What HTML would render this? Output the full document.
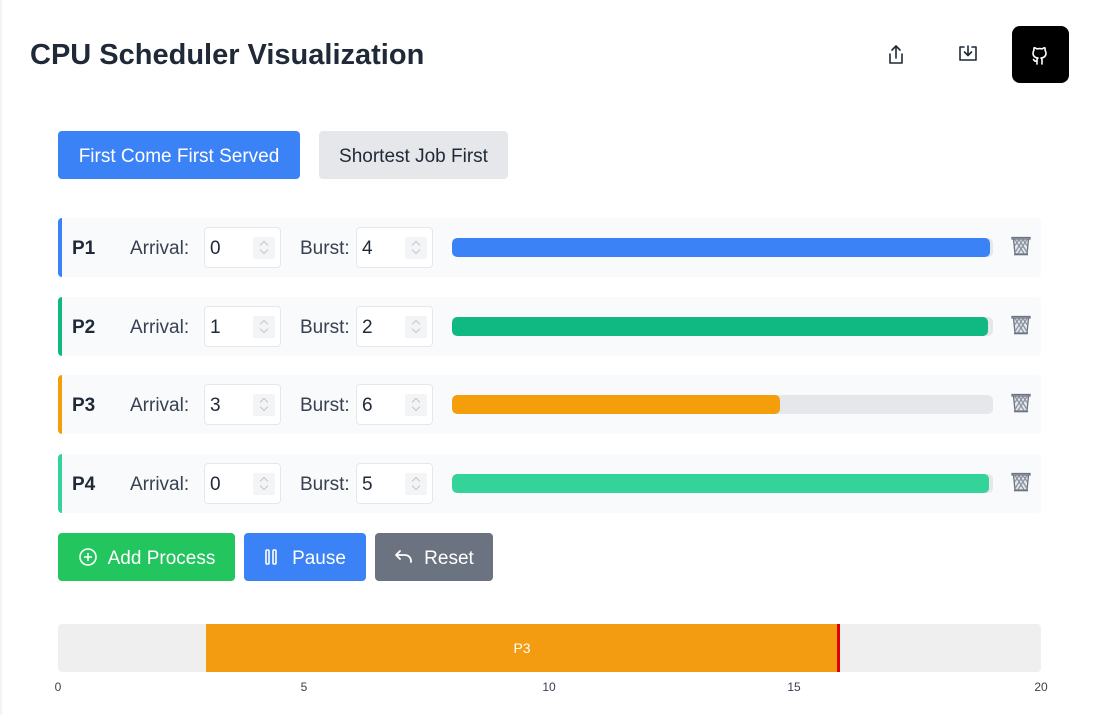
<!DOCTYPE html>
<html><head><meta charset="utf-8"><style>
*{box-sizing:border-box;margin:0;padding:0}
body{width:1098px;height:715px;background:#fff;font-family:"Liberation Sans",sans-serif;color:#1f2937;position:relative;overflow:hidden}
.abs{position:absolute}
h1{position:absolute;left:30px;top:39px;font-size:29px;font-weight:bold;color:#1f2937}
.btn{position:absolute;border-radius:4px;font-size:19px;display:flex;align-items:center;justify-content:center;color:#fff;padding-top:3px}
.row{position:absolute;left:58px;width:983px;height:59px;background:#f9fafb;border-radius:4px;border-left:4px solid}
.row .p{position:absolute;left:10px;top:20px;font-size:19px;font-weight:bold}
.row .l{position:absolute;top:20px;font-size:19px;color:#374151}
.inp{position:absolute;top:9px;width:77px;height:41px;border:1px solid #e5e7eb;border-radius:4px;background:#fff}
.inp span{position:absolute;left:5px;top:10px;font-size:19px}
.inp i{position:absolute;right:5px;top:9px;width:22px;height:22px;background:#f3f4f6;border-radius:2px}
.inp i:before,.inp i:after{content:"";position:absolute;left:8px;width:5px;height:5px;border:solid #c4c7cc;border-width:1.3px 0 0 1.3px}
.inp i:before{top:5px;transform:rotate(45deg)}
.inp i:after{top:10px;transform:rotate(225deg)}
.track{position:absolute;left:390px;top:20px;width:541px;height:19px;background:#e5e7eb;border-radius:5px;overflow:hidden}
.track b{display:block;height:100%;border-radius:5px}
.trash{position:absolute;left:949px;top:18px}
.ax{position:absolute;top:680px;font-size:12px;color:#374151;transform:translateX(-50%)}
</style></head><body>
<div class="abs" style="left:0;top:0;width:2px;height:715px;background:#f3f4f6"></div>
<h1>CPU Scheduler Visualization</h1>
<svg class="abs" style="left:886px;top:44px" width="20" height="22" viewBox="0 0 20 22" fill="none" stroke="#1f2937" stroke-width="1.6" stroke-linecap="round" stroke-linejoin="round"><path d="M10 14V2M6 6l4-4 4 4M4 10v9h12v-9"/></svg>
<svg class="abs" style="left:957px;top:44px" width="22" height="20" viewBox="0 0 22 20" fill="none" stroke="#1f2937" stroke-width="1.6" stroke-linecap="round" stroke-linejoin="round"><path d="M7 3H3v13h16V3h-4M11 2v9M7.5 8l3.5 3.5L14.5 8"/></svg>
<div class="abs" style="left:1012px;top:26px;width:57px;height:57px;background:#000;border-radius:8px"></div>
<svg class="abs" style="left:1030px;top:44px" width="20" height="22" viewBox="0 0 20 22" fill="none" stroke="#fff" stroke-width="1.6" stroke-linecap="round" stroke-linejoin="round"><path d="M7 20v-4c0-1 .4-1.7 1-2-3-.3-5-1.5-5-5 0-1 .3-2 1-2.7-.2-.8-.2-1.8.2-2.6 0 0 1 0 2.8 1.2 1.6-.4 3.4-.4 5 0C13.8 3.7 14.8 3.7 14.8 3.700c.4.8.4 1.8.2 2.6.7.7 1 1.7 1 2.7 0 3.5-2 4.7-5 5 .6.3 1 1 1 2v4M7 17c-2 .5-3-.5-3.5-1.5"/></svg>

<div class="btn" style="left:58px;top:131px;width:242px;height:48px;background:#3b82f6">First Come First Served</div>
<div class="btn" style="left:319px;top:131px;width:189px;height:48px;background:#e5e7eb;color:#1f2937">Shortest Job First</div>

<div class="row" style="top:218px;border-color:#3b82f6"><div class="p">P1</div><div class="l" style="left:68px">Arrival:</div><div class="inp" style="left:142px"><span>0</span><i></i></div><div class="l" style="left:238px">Burst:</div><div class="inp" style="left:294px"><span>4</span><i></i></div><div class="track"><b style="width:538px;background:#3b82f6"></b></div><svg class="trash" width="20" height="20" viewBox="0 0 20 20" fill="#e5e7eb" stroke="#6b7280" stroke-width="1.3"><path d="M1 1.5h18v1.5H1zM2.5 3l1.5 15h12l1.5-15"/><path fill="none" stroke="#8b95a1" d="M4 3.5l9 14M8 3.5l8 13M12 3.5l4 6M16 3.5l-9 14M12 3.5l-8 13M8 3.5l-4 6"/><path d="M3 18.5h14" stroke-width="1.6"/></svg></div>
<div class="row" style="top:297px;border-color:#10b981"><div class="p">P2</div><div class="l" style="left:68px">Arrival:</div><div class="inp" style="left:142px"><span>1</span><i></i></div><div class="l" style="left:238px">Burst:</div><div class="inp" style="left:294px"><span>2</span><i></i></div><div class="track"><b style="width:536px;background:#10b981"></b></div><svg class="trash" width="20" height="20" viewBox="0 0 20 20" fill="#e5e7eb" stroke="#6b7280" stroke-width="1.3"><path d="M1 1.5h18v1.5H1zM2.5 3l1.5 15h12l1.5-15"/><path fill="none" stroke="#8b95a1" d="M4 3.5l9 14M8 3.5l8 13M12 3.5l4 6M16 3.5l-9 14M12 3.5l-8 13M8 3.5l-4 6"/><path d="M3 18.5h14" stroke-width="1.6"/></svg></div>
<div class="row" style="top:375px;border-color:#f59e0b"><div class="p">P3</div><div class="l" style="left:68px">Arrival:</div><div class="inp" style="left:142px"><span>3</span><i></i></div><div class="l" style="left:238px">Burst:</div><div class="inp" style="left:294px"><span>6</span><i></i></div><div class="track"><b style="width:328px;background:#f59e0b"></b></div><svg class="trash" width="20" height="20" viewBox="0 0 20 20" fill="#e5e7eb" stroke="#6b7280" stroke-width="1.3"><path d="M1 1.5h18v1.5H1zM2.5 3l1.5 15h12l1.5-15"/><path fill="none" stroke="#8b95a1" d="M4 3.5l9 14M8 3.5l8 13M12 3.5l4 6M16 3.5l-9 14M12 3.5l-8 13M8 3.5l-4 6"/><path d="M3 18.5h14" stroke-width="1.6"/></svg></div>
<div class="row" style="top:454px;border-color:#34d399"><div class="p">P4</div><div class="l" style="left:68px">Arrival:</div><div class="inp" style="left:142px"><span>0</span><i></i></div><div class="l" style="left:238px">Burst:</div><div class="inp" style="left:294px"><span>5</span><i></i></div><div class="track"><b style="width:537px;background:#34d399"></b></div><svg class="trash" width="20" height="20" viewBox="0 0 20 20" fill="#e5e7eb" stroke="#6b7280" stroke-width="1.3"><path d="M1 1.5h18v1.5H1zM2.5 3l1.5 15h12l1.5-15"/><path fill="none" stroke="#8b95a1" d="M4 3.5l9 14M8 3.5l8 13M12 3.5l4 6M16 3.5l-9 14M12 3.5l-8 13M8 3.5l-4 6"/><path d="M3 18.5h14" stroke-width="1.6"/></svg></div>

<div class="btn" style="left:58px;top:533px;width:177px;height:48px;background:#22c55e"><svg width="20" height="20" viewBox="0 0 20 20" fill="none" stroke="#fff" stroke-width="1.6" style="margin-right:10px;margin-top:-3px"><circle cx="10" cy="10" r="8"/><path d="M10 6v8M6 10h8"/></svg>Add Process</div>
<div class="btn" style="left:244px;top:533px;width:122px;height:48px;background:#3b82f6"><svg width="14" height="18" viewBox="0 0 14 18" fill="none" stroke="#fff" stroke-width="1.6" style="margin-right:14px;margin-top:-3px"><rect x="2" y="2" width="3" height="14" rx="1"/><rect x="9" y="2" width="3" height="14" rx="1"/></svg>Pause</div>
<div class="btn" style="left:375px;top:533px;width:118px;height:48px;background:#6b7280"><svg width="20" height="18" viewBox="0 0 20 18" fill="none" stroke="#fff" stroke-width="1.8" stroke-linecap="round" stroke-linejoin="round" style="margin-right:10px;margin-top:-3px"><path d="M6 3L2 7l4 4M2 7h9a6 6 0 0 1 6 6v1"/></svg>Reset</div>

<div class="abs" style="left:58px;top:624px;width:983px;height:48px;background:#efefef;border-radius:4px"></div>
<div class="abs" style="left:206px;top:624px;width:632px;height:48px;background:#f39c12;color:#fff;font-size:14px;display:flex;align-items:center;justify-content:center">P3</div>
<div class="abs" style="left:837px;top:624px;width:3px;height:48px;background:#e00000"></div>
<div class="ax" style="left:58px">0</div><div class="ax" style="left:304px">5</div><div class="ax" style="left:549px">10</div><div class="ax" style="left:794px">15</div><div class="ax" style="left:1041px">20</div>
</body></html>
